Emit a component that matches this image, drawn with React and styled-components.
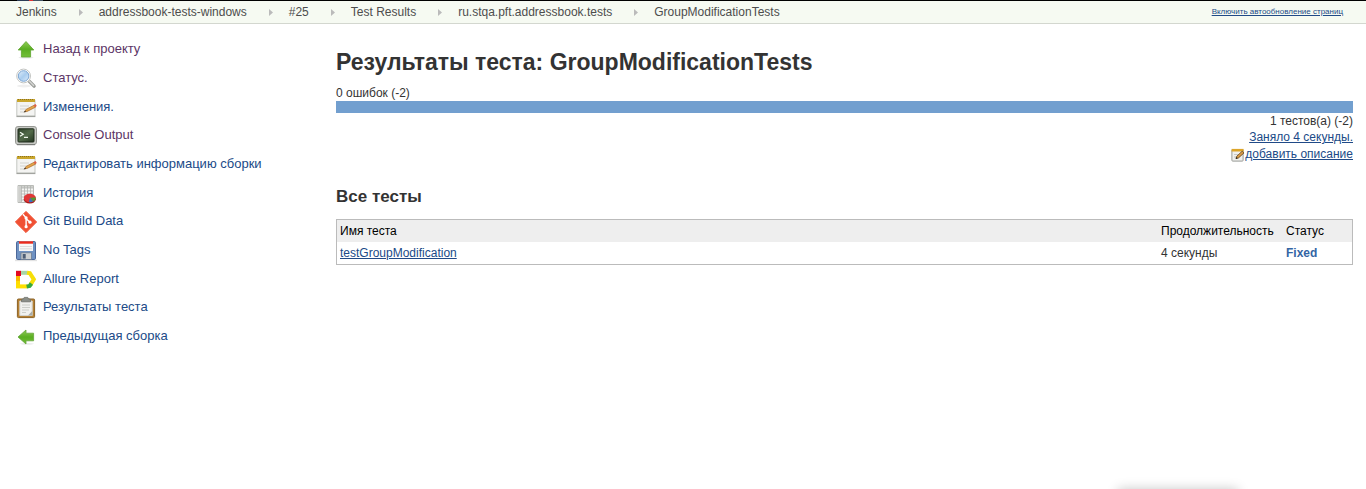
import React from "react";
import styled, { createGlobalStyle } from "styled-components";

const GlobalStyle = createGlobalStyle`
  * { box-sizing: border-box; }
  body {
    margin: 0;
    background: #fff;
    color: #333;
    font: 12px/16px "Liberation Sans", Arial, sans-serif;
  }
`;

const TopEdge = styled.div`
  height: 1px;
  background: linear-gradient(90deg, #000 17px, #2b3b55 17px 29px, #d33 29px 33px, #456 33px 43px, #000 43px);
`;

const Bar = styled.header`
  display: flex;
  align-items: center;
  justify-content: space-between;
  height: 23px;
  padding: 0 23px 0 16px;
  background: #f6faf2;
  border-bottom: 1px solid #d3d7cf;
`;

const Crumbs = styled.ol`
  display: flex;
  align-items: center;
  margin: 0;
  padding: 0;
  list-style: none;
  font-size: 12px;
`;

const Crumb = styled.li`
  display: flex;
  align-items: center;
  a {
    color: #4d4d4d;
    text-decoration: none;
  }
  svg {
    margin: 0 16px 0 22px;
  }
`;

const RefreshLink = styled.a`
  color: #204a87;
  font-size: 8px;
  line-height: 12px;
`;

const Page = styled.div`
  display: flex;
  align-items: flex-start;
`;

const SidePanel = styled.nav`
  flex: 0 0 336px;
  padding: 11px 14px;
`;

const TaskList = styled.ul`
  margin: 0;
  padding: 0;
  list-style: none;
`;

const Task = styled.li`
  height: 29px;
  &:nth-child(3n) {
    height: 28px;
  }
`;

const TaskLink = styled.a`
  display: flex;
  gap: 5px;
  color: ${(p) => (p.$visited ? "#5c3566" : "#204a87")};
  font-size: 13px;
  line-height: 28px;
  text-decoration: none;
  svg {
    flex: none;
    margin-top: 3px;
  }
`;

const Main = styled.main`
  flex: 1;
  min-width: 0;
  padding: 22px 13px 0 0;
`;

const Title = styled.h1`
  margin: 0 0 7px;
  font-size: 23px;
  line-height: 32px;
`;

const Subtitle = styled.h2`
  margin: 24px 0 12px;
  font-size: 17px;
  line-height: 20px;
`;

const ResultBar = styled.div`
  height: 12px;
  background: #729fcf;
`;

const Summary = styled.div`
  display: flex;
  flex-direction: column;
  align-items: flex-end;
`;

const BlueLink = styled.a`
  color: #204a87;
`;

const EditLink = styled(BlueLink)`
  display: flex;
  align-items: center;
  line-height: 18px;
  svg {
    margin-top: 2px;
  }
`;

const Results = styled.table`
  width: 100%;
  border: 1px solid #bbb;
  border-collapse: separate;
  border-spacing: 0;
  th,
  td {
    padding: 3px;
    text-align: left;
    font-weight: normal;
  }
  th {
    color: #000;
    background: #eee;
  }
`;

const Cell = styled.td`
  width: ${(p) => p.$width};
`;

const Status = styled.strong`
  color: #3465a4;
`;

const StatusPopup = styled.div`
  position: fixed;
  right: 130px;
  bottom: -12px;
  width: 116px;
  height: 10px;
  box-shadow: 0 0 12px 2px rgba(0, 0, 0, 0.22);
`;

const Icon = ({ size = 24, viewBox = "0 0 24 24", children }) => (
  <svg width={size} height={size} viewBox={viewBox} aria-hidden="true">
    {children}
  </svg>
);

const ArrowDefs = ({ id }) => (
  <defs>
    <linearGradient id={id} x1="0" y1="0" x2="0" y2="1">
      <stop offset="0" stopColor="#91cc54" />
      <stop offset="0.5" stopColor="#5aae22" />
      <stop offset="1" stopColor="#73bf38" />
    </linearGradient>
  </defs>
);

const UpIcon = () => (
  <Icon>
    <ArrowDefs id="up" />
    <ellipse cx="12" cy="19.6" rx="7.5" ry="1" fill="#e8e8e8" />
    <path d="M12 3.5 19.8 12H16.6V19H7.4V12H4.2Z" fill="url(#up)" stroke="#5da52d" strokeWidth="0.8" strokeLinejoin="round" />
  </Icon>
);

const BackIcon = () => (
  <Icon>
    <ArrowDefs id="back" />
    <ellipse cx="13" cy="18.8" rx="7" ry="0.9" fill="#ebebeb" />
    <path d="M4 12 12 5V8.2H19.6V15.8H12V19Z" fill="url(#back)" stroke="#64a53a" strokeWidth="0.8" strokeLinejoin="round" />
  </Icon>
);

const SearchIcon = () => (
  <Icon>
    <defs>
      <linearGradient id="lens" x1="0" y1="0" x2="1" y2="1">
        <stop offset="0" stopColor="#e4f0fb" />
        <stop offset="0.5" stopColor="#a9ccee" />
        <stop offset="1" stopColor="#dcecfb" />
      </linearGradient>
    </defs>
    <ellipse cx="10" cy="19" rx="7" ry="1.4" fill="#efefef" />
    <path d="m14.5 13.5 5.6 5.6" stroke="#9a9c98" strokeWidth="3.4" strokeLinecap="round" />
    <path d="m15 13.8 4.6 4.6" stroke="#d6d7d5" strokeWidth="1.4" strokeLinecap="round" />
    <circle cx="9.6" cy="9" r="6.9" fill="#fff" stroke="#c3c5c2" strokeWidth="1" />
    <circle cx="9.6" cy="9" r="5.3" fill="url(#lens)" stroke="#7ba5d3" strokeWidth="1" />
  </Icon>
);

const NotepadIcon = () => (
  <Icon>
    <rect x="2.8" y="3.5" width="18.2" height="16.8" rx="1" fill="#f4f4f2" stroke="#c4c6c1" />
    <path d="M2.4 20.4H21.4" stroke="#a2a49f" strokeWidth="1.4" />
    <rect x="3" y="3" width="18" height="3" fill="#c9a62c" />
    <path d="M4 3.5H20" stroke="#8d7220" strokeWidth="1" strokeDasharray="1 1" />
    <path d="M6 10H15M6 13H12M6 16H10" stroke="#d2d3cf" />
    <path d="m10.4 16 1.6-2.6 8.6-4.4 1.2 2-8.6 4.4Z" fill="#e5a74a" stroke="#a8692a" strokeWidth="0.7" />
    <path d="m19.6 9.2 2-1.2 1.2 2-2 1.2Z" fill="#dd6148" />
    <path d="m9.6 16.4 1.6-1.8.8 1.2Z" fill="#333" />
  </Icon>
);

const EditIcon = () => (
  <Icon size={14} viewBox="0 0 14 14">
    <rect x="0.9" y="1.5" width="11.2" height="11.6" rx="0.8" fill="#f0f0ee" stroke="#989a95" />
    <path d="M0.6 2.2H12.6" stroke="#dca52a" strokeWidth="2.6" />
    <path d="M3 6.5H7M3 9H5" stroke="#c9cac6" />
    <path d="m5 10.6.8-2.4 5.4-5 1.8 1.7-5.5 5Z" fill="#d89b47" stroke="#624018" strokeWidth="0.8" />
    <path d="m4.6 11 .9-2 1.2 1.3Z" fill="#222" />
  </Icon>
);

const TerminalIcon = () => (
  <Icon>
    <defs>
      <linearGradient id="screen" x1="0" y1="0" x2="1" y2="1">
        <stop offset="0" stopColor="#30432b" />
        <stop offset="0.5" stopColor="#526a49" />
        <stop offset="1" stopColor="#233420" />
      </linearGradient>
    </defs>
    <rect x="1.5" y="2.5" width="21" height="18" rx="2.4" fill="#c8cac5" stroke="#979994" />
    <path d="M3 20.6H21" stroke="#7b7d79" strokeWidth="1.2" />
    <rect x="4" y="4.8" width="16" height="13.2" rx="0.8" fill="url(#screen)" stroke="#1e2b1c" />
    <path d="m6 8.2 3.2 2L6 12.3M10 13.4H14" fill="none" stroke="#f0f7ec" strokeWidth="1.3" />
  </Icon>
);

const ChartIcon = () => (
  <Icon>
    <path d="M4 3.5H19.5V20.5H4Z" fill="#f4f4f2" stroke="#b9bbb7" />
    <path d="M4.5 4H7V20H4.5ZM7 4H19V6H7Z" fill="#cfd0cd" />
    <path d="M7 6H19M7 9H19M7 12H19M7 15H19M7 18H19M7.5 4V20M10.5 4V20M13.5 4V20M16.5 4V20" stroke="#b3b5b1" strokeWidth="0.8" />
    <ellipse cx="15.8" cy="17.2" rx="6" ry="4.2" fill="#a81818" />
    <ellipse cx="15.8" cy="16" rx="6" ry="4.2" fill="#e03838" />
    <path d="M16 15.8 21.8 15.6Q22 18.2 19 19.6Z" fill="#4e9a35" />
    <path d="M16 15.8 19 19.6Q16.8 20.9 14.8 19.9Z" fill="#3b72bd" />
  </Icon>
);

const GitIcon = () => (
  <Icon>
    <path d="M12 1.4 22.6 12 12 22.6 1.4 12Z" fill="#f05033" stroke="#f05033" strokeWidth="1" strokeLinejoin="round" />
    <path d="m9 4.2 3.1 3.7V17M12.2 8.7 16 12.3" fill="none" stroke="#fff" strokeWidth="1.4" />
    <circle cx="12.1" cy="7.9" r="1.6" fill="#fff" />
    <circle cx="16" cy="12.2" r="1.6" fill="#fff" />
    <circle cx="12.1" cy="16.7" r="1.6" fill="#fff" />
  </Icon>
);

const FloppyIcon = () => (
  <Icon>
    <path d="M1 21.4H23" stroke="#e2e2e2" strokeWidth="1.6" />
    <rect x="2.5" y="2.5" width="19" height="18" rx="1.2" fill="#6f92c2" stroke="#4c689a" />
    <rect x="5" y="2.5" width="14" height="9.5" fill="#f8f8f8" />
    <rect x="5" y="2.3" width="14" height="2.4" fill="#ec2a1c" />
    <path d="M6 7.5H18M6 9.8H18" stroke="#d4d4d4" strokeWidth="0.8" />
    <rect x="7" y="13.8" width="10.5" height="6.6" fill="#cdd0d2" stroke="#6c7c91" strokeWidth="0.8" />
    <rect x="8.7" y="15" width="3" height="4.6" fill="#4d5e76" />
  </Icon>
);

const AllureIcon = () => (
  <Icon>
    <g fill="none" strokeWidth="4">
      <path d="M6.5 4.8H13.5" stroke="#a8d5a6" />
      <path d="M4 9V18" stroke="#ffdc00" />
      <path d="M2 18.4H13.5" stroke="#ffe000" />
      <path d="m13 4.8 2.8.4L19.8 11.4 16.6 16.6" stroke="#f7df08" />
      <path d="m12.6 18.6 3-.6 1.8-2.5" stroke="#36a93f" />
    </g>
    <path d="M2 2.8H7V8H2Z" fill="#e30920" />
    <path d="M2 8H6V13H2Z" fill="#f9b900" />
  </Icon>
);

const ClipboardIcon = () => (
  <Icon>
    <rect x="3.4" y="3" width="17.2" height="18.6" rx="1" fill="#b78132" stroke="#8a6226" />
    <path d="M5.8 5H18.2V19.5H5.8Z" fill="#f1f1ee" stroke="#d2d2cc" />
    <path d="M8 9H16M8 11.5H16M8 14H15M8 16.5H12" stroke="#cccec9" />
    <path d="m14 19.6 4.3-4.6V19.6Z" fill="#a9aba6" />
    <path d="M7.5 5.8V3.4L9.6 2.8 10.2 1.4H13.8L14.4 2.8 16.5 3.4V5.8Z" fill="#8b8e88" stroke="#6d706a" strokeWidth="0.8" />
  </Icon>
);

const Separator = () => (
  <svg width="4" height="7" viewBox="0 0 4 7" aria-hidden="true">
    <path d="M0 0 4 3.5 0 7Z" fill="#bbb" />
  </svg>
);

const crumbs = [
  "Jenkins",
  "addressbook-tests-windows",
  "#25",
  "Test Results",
  "ru.stqa.pft.addressbook.tests",
  "GroupModificationTests",
];

const tasks = [
  { label: "Назад к проекту", icon: UpIcon, visited: true },
  { label: "Статус.", icon: SearchIcon, visited: true },
  { label: "Изменения.", icon: NotepadIcon },
  { label: "Console Output", icon: TerminalIcon, visited: true },
  { label: "Редактировать информацию сборки", icon: NotepadIcon },
  { label: "История", icon: ChartIcon },
  { label: "Git Build Data", icon: GitIcon },
  { label: "No Tags", icon: FloppyIcon },
  { label: "Allure Report", icon: AllureIcon },
  { label: "Результаты теста", icon: ClipboardIcon },
  { label: "Предыдущая сборка", icon: BackIcon },
];

export default function App() {
  return (
    <>
      <GlobalStyle />
      <TopEdge />
      <Bar>
        <Crumbs>
          {crumbs.map((name, i) => (
            <Crumb key={name}>
              {i > 0 && <Separator />}
              <a href="#">{name}</a>
            </Crumb>
          ))}
        </Crumbs>
        <RefreshLink href="#">Включить автообновление страниц</RefreshLink>
      </Bar>
      <Page>
        <SidePanel>
          <TaskList>
            {tasks.map(({ label, icon: TaskIcon, visited }) => (
              <Task key={label}>
                <TaskLink href="#" $visited={visited}>
                  <TaskIcon />
                  {label}
                </TaskLink>
              </Task>
            ))}
          </TaskList>
        </SidePanel>
        <Main>
          <Title>Результаты теста: GroupModificationTests</Title>
          <div>0 ошибок (-2)</div>
          <ResultBar />
          <Summary>
            <div>1 тестов(а) (-2)</div>
            <BlueLink href="#">Заняло 4 секунды.</BlueLink>
            <EditLink href="#">
              <EditIcon />
              добавить описание
            </EditLink>
          </Summary>
          <Subtitle>Все тесты</Subtitle>
          <Results>
            <thead>
              <tr>
                <Cell as="th">Имя теста</Cell>
                <Cell as="th" $width="125px">Продолжительность</Cell>
                <Cell as="th" $width="69px">Статус</Cell>
              </tr>
            </thead>
            <tbody>
              <tr>
                <Cell><BlueLink href="#">testGroupModification</BlueLink></Cell>
                <Cell>4 секунды</Cell>
                <Cell><Status>Fixed</Status></Cell>
              </tr>
            </tbody>
          </Results>
        </Main>
      </Page>
      <StatusPopup />
    </>
  );
}
